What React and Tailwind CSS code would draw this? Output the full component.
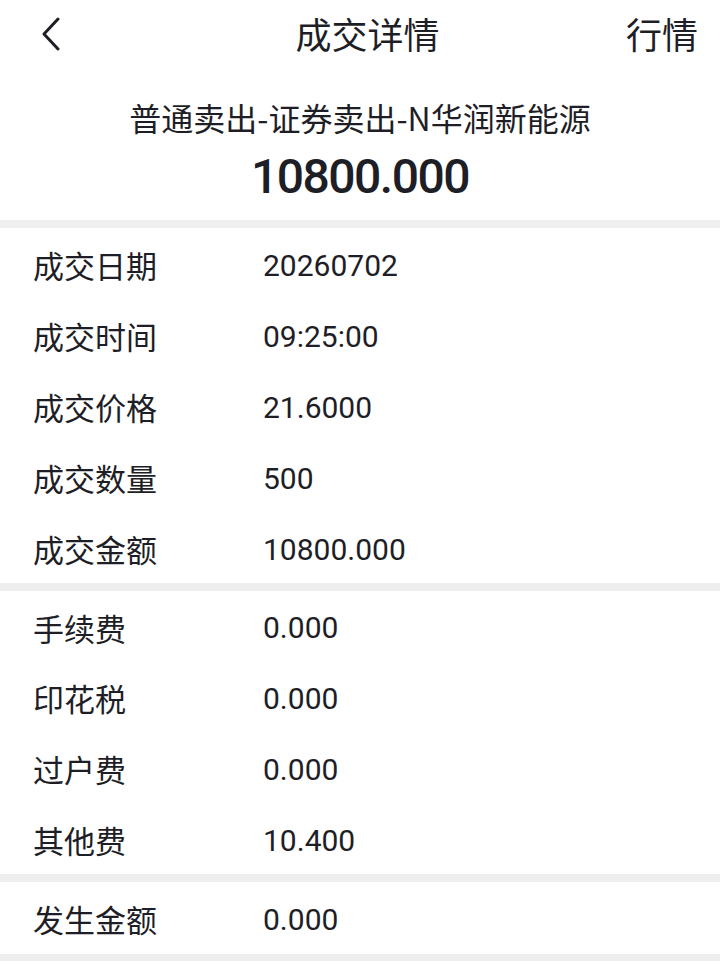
import React from "react";

const tradeRows = [
  ["成交日期", "20260702"],
  ["成交时间", "09:25:00"],
  ["成交价格", "21.6000"],
  ["成交数量", "500"],
  ["成交金额", "10800.000"],
];

const feeRows = [
  ["手续费", "0.000"],
  ["印花税", "0.000"],
  ["过户费", "0.000"],
  ["其他费", "10.400"],
];

const totalRows = [["发生金额", "0.000"]];

const cjk = "font-['Noto_Sans_CJK_SC',sans-serif]";
const num = "font-['Roboto','Noto_Sans_CJK_SC',sans-serif]";

const Row = ({ label, value, h }) => (
  <div className={`flex items-center pt-[3px] ${h}`}>
    <div className={`w-[263px] pl-[33px] text-[31px] text-[#1e1e26] ${cjk}`}>{label}</div>
    <div className={`text-[30px] text-[#1e1e26] ${num}`}>{value}</div>
  </div>
);

const Gap = () => <div className="h-[8px] bg-[#eeeeee]" />;

const App = () => {
  return (
    <div className="w-[720px] h-[961px] bg-white overflow-hidden">
      {/* top bar */}
      <header className="relative h-[72px] pb-[7px] flex items-center justify-center">
        <button className="absolute left-[36px] top-[16px] w-[30px] h-[36px] flex items-center justify-center">
          <svg width="22" height="34" viewBox="0 0 22 34" fill="none">
            <path d="M18 2 L4 17 L18 32" stroke="#1e1e26" strokeWidth="3" strokeLinecap="round" strokeLinejoin="round" />
          </svg>
        </button>
        <h1 className={`ml-[15px] text-[36px] text-[#1e1e26] ${cjk}`}>成交详情</h1>
        <span className={`absolute right-[22px] top-[6px] text-[36px] text-[#1e1e26] ${cjk}`}>行情</span>
      </header>

      {/* summary */}
      <div className="pt-[23px] pb-[15px] flex flex-col items-center">
        <div className={`text-[32px] leading-[44px] text-[#1e1e26] ${cjk}`}>
          普通卖出-证券卖出-N华润新能源
        </div>
        <div className={`mt-[10px] text-[48px] leading-[56px] font-medium tracking-[-1.5px] text-[#1e1e26] ${num}`}>
          10800.000
        </div>
      </div>

      <Gap />
      {tradeRows.map(([l, v]) => (
        <Row key={l} label={l} value={v} h="h-[71px]" />
      ))}
      <Gap />
      {feeRows.map(([l, v]) => (
        <Row key={l} label={l} value={v} h="h-[70.75px]" />
      ))}
      <Gap />
      {totalRows.map(([l, v]) => (
        <Row key={l} label={l} value={v} h="h-[72px]" />
      ))}
      <div className="h-[20px] bg-[#eeeeee]" />
    </div>
  );
};

export default App;
